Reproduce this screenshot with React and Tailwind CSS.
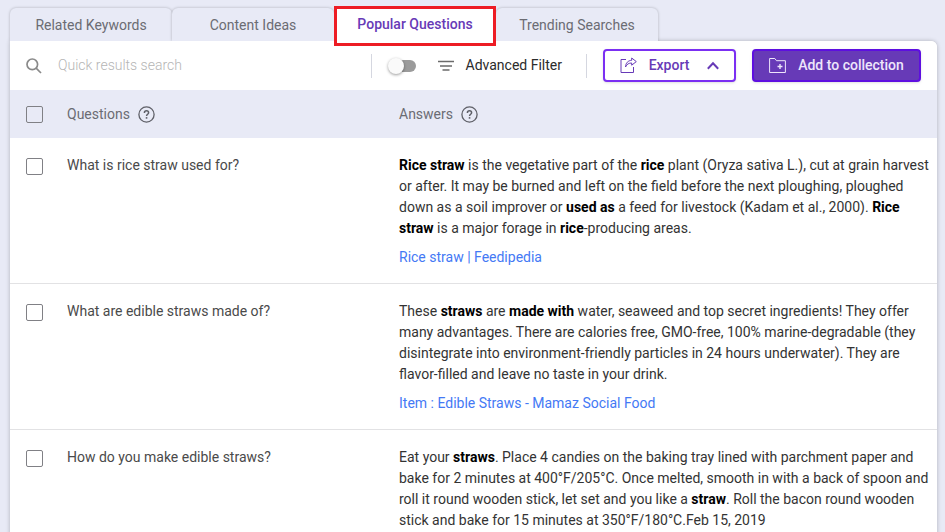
import React, { useState } from 'react';

const TABS = ['Related Keywords', 'Content Ideas', 'Popular Questions', 'Trending Searches'];

const QUESTIONS = [
  {
    id: 1,
    question: 'What is rice straw used for?',
    answer: (
      <>
        <b>Rice straw</b> is the vegetative part of the <b>rice</b> plant (Oryza sativa L.), cut at grain harvest
        or after. It may be burned and left on the field before the next ploughing, ploughed down as a soil
        improver or <b>used as</b> a feed for livestock (Kadam et al., 2000). <b>Rice straw</b> is a major forage
        in <b>rice</b>-producing areas.
      </>
    ),
    source: 'Rice straw | Feedipedia',
  },
  {
    id: 2,
    question: 'What are edible straws made of?',
    answer: (
      <>
        These <b>straws</b> are <b>made with</b> water, seaweed and top secret ingredients! They offer many
        advantages. There are calories free, GMO-free, 100% marine-degradable (they disintegrate into
        environment-friendly particles in 24 hours underwater). They are flavor-filled and leave no taste in your
        drink.
      </>
    ),
    source: 'Item : Edible Straws - Mamaz Social Food',
  },
  {
    id: 3,
    question: 'How do you make edible straws?',
    answer: (
      <>
        Eat your <b>straws</b>. Place 4 candies on the baking tray lined with parchment paper and bake for 2
        minutes at 400°F/205°C. Once melted, smooth in with a back of spoon and roll it round wooden stick, let set
        and you like a <b>straw</b>. Roll the bacon round wooden stick and bake for 15 minutes at 350°F/180°C.Feb
        15, 2019
      </>
    ),
  },
];

const SearchIcon = () => (
  <svg className="h-4 w-4 shrink-0 text-[#8a8a8a]" viewBox="0 0 16 16" fill="none" stroke="currentColor" strokeWidth="1.7">
    <circle cx="6.3" cy="6.3" r="5.3" />
    <path d="M10.1 10.1 15 15" />
  </svg>
);

const FilterIcon = () => (
  <svg className="h-4 w-4" viewBox="0 0 16 16" fill="none" stroke="#6b6b6b" strokeWidth="1.7">
    <path d="M0 3.5h16M2 8h12M4.5 12h7" />
  </svg>
);

const HelpIcon = () => (
  <svg className="h-[17px] w-[17px]" viewBox="0 0 17 17" fill="none" stroke="#5f6068" strokeWidth="1.3">
    <circle cx="8.5" cy="8.5" r="7.6" />
    <path d="M6.4 6.9c0-1.3.9-2.1 2.1-2.1s2.1.8 2.1 1.9c0 1.5-2 1.6-2 3.2" strokeWidth="1.5" />
    <path d="M8.55 11.1v1.6" strokeWidth="1.6" />
  </svg>
);

const ExportIcon = () => (
  <svg className="h-[17px] w-[17px]" viewBox="0 0 17 17" fill="none" stroke="currentColor" strokeWidth="1">
    <path d="M6 2.5H1v13h12.5V10" />
    <path d="M11.7 1 16.3 4.600l-4.600 3.600V6C8.800 6 7 7 5.500 10 5.700 6 8 3.500 11.700 3.300z" strokeLinejoin="round" />
  </svg>
);

const FolderIcon = () => (
  <svg className="h-[17px] w-[17px]" viewBox="0 0 17 17" fill="none" stroke="currentColor" strokeWidth="1">
    <path d="M.6 15.500V1.500h5.200l1.700 2.200h8.900v11.800z" strokeLinejoin="round" />
    <path d="M11 7v5M8.500 9.500h5" strokeWidth="1.4" />
  </svg>
);

const ChevronUp = () => (
  <svg className="h-3 w-3" viewBox="0 0 12 12" fill="none" stroke="currentColor" strokeWidth="2">
    <path d="M.8 8.700 6 3.300l5.200 5.400" />
  </svg>
);

const Checkbox = ({ label, checked, onChange }) => (
  <input
    type="checkbox"
    aria-label={label}
    checked={checked}
    onChange={onChange}
    className="block h-[17px] w-[17px] appearance-none rounded-xs border border-[#808085] checked:border-[#673ab7] checked:bg-[#673ab7]"
  />
);

const Tab = ({ name, active, onClick }) => (
  <button
    type="button"
    role="tab"
    aria-selected={active}
    onClick={onClick}
    className={
      active
        ? 'relative z-10 -mt-0.5 -mb-[5px] w-1/4 border-[3px] border-[#ed1c24] bg-white pb-1 font-medium text-[#673ab7]'
        : 'w-1/4 rounded-t-md bg-[#e8eaf6] pt-0.5 text-[#6b6c73] shadow-[0_0_3px_rgba(0,0,0,0.25)]'
    }
  >
    {name}
  </button>
);

const Toolbar = ({ search, setSearch }) => (
  <div className="relative flex h-[49px] items-center rounded-tr-md bg-white pr-4 pl-4">
    <SearchIcon />
    <input
      type="text"
      aria-label="Quick results search"
      placeholder="Quick results search"
      value={search}
      onChange={(e) => setSearch(e.target.value)}
      className="ml-4 min-w-0 flex-1 font-light text-[#444] outline-none placeholder:text-[#b5b5b5]"
    />
    <div className="h-6 w-px bg-[#d5d7e0]" />
    <label className="mr-6 ml-4 flex items-center gap-[22px]">
      <span className="relative flex h-4 w-7 items-center">
        <input
          type="checkbox"
          role="switch"
          aria-label="Advanced Filter"
          className="peer ml-1 h-3 w-6 appearance-none rounded-full bg-[#9b9b9b] checked:bg-[#b39ddb]"
        />
        <span className="pointer-events-none absolute left-0 h-4 w-4 rounded-full bg-[#fafafa] shadow-[0_1px_3px_rgba(0,0,0,0.4)] peer-checked:left-3" />
      </span>
      <span className="flex items-center gap-3 text-[#2b2b2b]">
        <FilterIcon />
        Advanced Filter
      </span>
    </label>
    <div className="mr-4 h-6 w-px bg-[#d5d7e0]" />
    <button
      type="button"
      className="flex h-[33px] w-[133px] items-center justify-center rounded-sm border-2 border-[#7b2ff2] bg-white font-medium text-[#673ab7] shadow-sm"
    >
      <ExportIcon />
      <span className="mr-[18px] ml-3">Export</span>
      <ChevronUp />
    </button>
    <button
      type="button"
      className="ml-4 flex h-[33px] w-[169px] items-center justify-center gap-3 rounded-sm border-2 border-[#5e0fe0] bg-[#673ab7] font-medium text-[#eee6fb] shadow-sm"
    >
      <FolderIcon />
      Add to collection
    </button>
  </div>
);

const App = () => {
  const [activeTab, setActiveTab] = useState('Popular Questions');
  const [search, setSearch] = useState('');
  const [selected, setSelected] = useState([]);

  const toggle = (id) => {
    setSelected(selected.includes(id) ? selected.filter((s) => s !== id) : [...selected, id]);
  };

  const toggleAll = () => {
    setSelected(selected.length === QUESTIONS.length ? [] : QUESTIONS.map((q) => q.id));
  };

  const rows = QUESTIONS.filter((q) => q.question.toLowerCase().includes(search.toLowerCase()));

  return (
    <div className="h-screen overflow-hidden bg-[#e8eaf6] pt-2 pr-2 pl-2.5 font-['Roboto',sans-serif] text-[14px] leading-[21px]">
      {/* Tabs */}
      <div role="tablist" className="flex h-[33px] w-[71%] max-w-[648px]">
        {TABS.map((tab) => (
          <Tab key={tab} name={tab} active={tab === activeTab} onClick={() => setActiveTab(tab)} />
        ))}
      </div>

      <div className="rounded-tr-md bg-white shadow-[0_0_4px_rgba(0,0,0,0.25)]">
        <Toolbar search={search} setSearch={setSearch} />

        {/* Results */}
        <table className="w-full table-fixed border-collapse text-left">
          <thead>
            <tr className="h-12 bg-[#e8eaf6] text-[#6b6c73]">
              <th className="w-[57px] pl-4">
                <Checkbox
                  label="Select all"
                  checked={selected.length === QUESTIONS.length}
                  onChange={toggleAll}
                />
              </th>
              <th className="w-[332px] font-normal">
                <span className="flex items-center gap-2">
                  Questions <HelpIcon />
                </span>
              </th>
              <th className="font-normal">
                <span className="flex items-center gap-2">
                  Answers <HelpIcon />
                </span>
              </th>
            </tr>
          </thead>
          <tbody>
            {rows.map((row) => (
              <tr key={row.id} className="border-b border-[#e2e2e4] align-top">
                <td className="pt-5 pl-4">
                  <Checkbox
                    label={row.question}
                    checked={selected.includes(row.id)}
                    onChange={() => toggle(row.id)}
                  />
                </td>
                <td className="pt-[17px] text-[#4a4a4a]">{row.question}</td>
                <td className="pt-[17px] pb-[15px] text-[#333] [&_b]:font-bold [&_b]:text-black">
                  <p>{row.answer}</p>
                  {row.source && (
                    <a href="#source" className="mt-2 block text-[#4479f5]">
                      {row.source}
                    </a>
                  )}
                </td>
              </tr>
            ))}
          </tbody>
        </table>
      </div>
    </div>
  );
};

export default App;
